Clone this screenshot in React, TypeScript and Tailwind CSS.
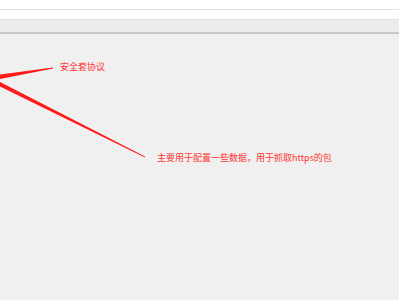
export default function App() {
    return (
        <div className="w-[399px] h-[300px] bg-[#f0f0f0] flex flex-col overflow-hidden" style={{ fontFamily: '"Noto Sans CJK SC", "Microsoft YaHei", sans-serif' }}>
            <div className="h-[9px] bg-white shrink-0" />
            <div className="h-[10px] bg-white border-t border-[#e2e2e2] shrink-0" />
            <div className="h-[15px] bg-[#ececec] border-t border-[#e2e2e2] border-b-2 border-b-[#c8c8c8] shrink-0" />

            {/* annotation canvas */}
            <div className="relative flex-1">
                <svg className="absolute inset-0" width="399" height="266" viewBox="0 34 399 266">
                    <polygon points="0,74.5 53,67.5 53,68.5 0,79" fill="#ff1a1a" />
                    <polygon points="0,82 145,156.5 145,157.5 0,86.5" fill="#ff1a1a" />
                </svg>
                <span className="absolute left-[60px] top-[28px] text-[9px] leading-none text-[#ff3333]">
                    安全套协议
                </span>
                <span className="absolute left-[157px] top-[119px] text-[9px] leading-none text-[#ff3333]">
                    主要用于配置一些数据，用于抓取https的包
                </span>
            </div>
        </div>
    );
}
